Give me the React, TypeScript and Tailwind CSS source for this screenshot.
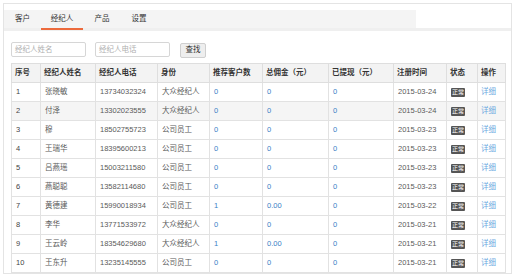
import React from "react";

const rows = [
  ["1", "张晓敏", "13734032324", "大众经纪人", "0", "0", "0", "2015-03-24"],
  ["2", "付泽", "13302023555", "大众经纪人", "0", "0", "0", "2015-03-24"],
  ["3", "穆", "18502755723", "公司员工", "0", "0", "0", "2015-03-23"],
  ["4", "王瑞华", "18395600213", "公司员工", "0", "0", "0", "2015-03-23"],
  ["5", "吕燕瑶", "15003211580", "公司员工", "0", "0", "0", "2015-03-23"],
  ["6", "燕聪聪", "13582114680", "公司员工", "0", "0", "0", "2015-03-23"],
  ["7", "黄德建", "15990018934", "公司员工", "1", "0.00", "0", "2015-03-22"],
  ["8", "李华", "13771533972", "大众经纪人", "0", "0", "0", "2015-03-21"],
  ["9", "王云岭", "18354629680", "大众经纪人", "1", "0.00", "0", "2015-03-21"],
  ["10", "王东升", "13235145555", "公司员工", "0", "0", "0", "2015-03-21"],
];

const headers = ["序号", "经纪人姓名", "经纪人电话", "身份", "推荐客户数", "总佣金（元）", "已提现（元）", "注册时间", "状态", "操作"];
const widths = [29, 55, 62, 52, 53, 66, 65, 53, 31, 28];

export default function App() {
  return (
    <div className="w-[520px] h-[277px] bg-white pt-[3px] pl-[3px] font-['Liberation_Sans','Noto_Sans_CJK_SC',sans-serif] text-[7.5px] text-[#5a5a5a]">
      <div className="w-[509px] h-[271px] border border-[#e4e4e4] pt-[6px]">
        <div className="flex border-b-[3px] border-[#efefef]">
          <div className="flex w-[412px] h-[18px] bg-[#f4f4f4] text-[#333]">
            <div className="w-[37px] flex items-center justify-center">客户</div>
            <div className="w-[42px] flex items-center justify-center relative">
              经纪人
              <span className="absolute left-0 right-0 bottom-[-2px] h-[2px] bg-[#ec6a3c]" />
            </div>
            <div className="w-[38px] flex items-center justify-center">产品</div>
            <div className="w-[36px] flex items-center justify-center">设置</div>
          </div>
        </div>
        <div className="px-[7px]">
          <div className="flex items-center mt-[11px] h-[15px]">
            <div className="w-[75px] h-[15px] border border-[#d6d6d6] rounded-[2px] flex items-center pl-[3px] text-[#b0b0b0]">
              经纪人姓名
            </div>
            <div className="w-[75px] h-[15px] border border-[#d6d6d6] rounded-[2px] flex items-center pl-[3px] ml-[9px] text-[#b0b0b0]">
              经纪人电话
            </div>
            <div className="w-[26px] h-[15px] border border-[#cfcfcf] rounded-[2px] bg-[#eeeeee] flex items-center justify-center ml-[10px] mt-[1px] text-[#333]">
              查找
            </div>
          </div>
          <table className="mt-[6px] table-fixed border-collapse w-[494px]">
            <colgroup>
              {widths.map((w, i) => (
                <col key={i} style={{ width: w }} />
              ))}
            </colgroup>
            <thead>
              <tr className="h-[19px] bg-[#f3f3f3]">
                {headers.map((h) => (
                  <th key={h} className="border border-[#dedede] text-left font-bold text-[#333] pl-[3px] whitespace-nowrap">
                    {h}
                  </th>
                ))}
              </tr>
            </thead>
            <tbody>
              {rows.map((r, i) => (
                <tr key={i} className={i === 1 ? "h-[19px] bg-[#f5f5f5]" : "h-[19px] bg-white"}>
                  <td className="border border-[#e2e2e2] pl-[4px] text-[#444]">{r[0]}</td>
                  <td className="border border-[#e2e2e2] pl-[4px]">{r[1]}</td>
                  <td className="border border-[#e2e2e2] pl-[4px]">{r[2]}</td>
                  <td className="border border-[#e2e2e2] pl-[4px]">{r[3]}</td>
                  <td className="border border-[#e2e2e2] pl-[4px] text-[#3a80c6]">{r[4]}</td>
                  <td className="border border-[#e2e2e2] pl-[4px] text-[#3a80c6]">{r[5]}</td>
                  <td className="border border-[#e2e2e2] pl-[4px] text-[#3a80c6]">{r[6]}</td>
                  <td className="border border-[#e2e2e2] pl-[4px]">{r[7]}</td>
                  <td className="border border-[#e2e2e2] pl-[4px]">
                    <span className="inline-flex items-center justify-center w-[14px] h-[9px] rounded-[1px] bg-[#555] text-white text-[6px] leading-none align-middle">
                      正常
                    </span>
                  </td>
                  <td className="border border-[#e2e2e2] pl-[3px] text-[#6aa8e0]">详细</td>
                </tr>
              ))}
            </tbody>
          </table>
        </div>
      </div>
    </div>
  );
}
